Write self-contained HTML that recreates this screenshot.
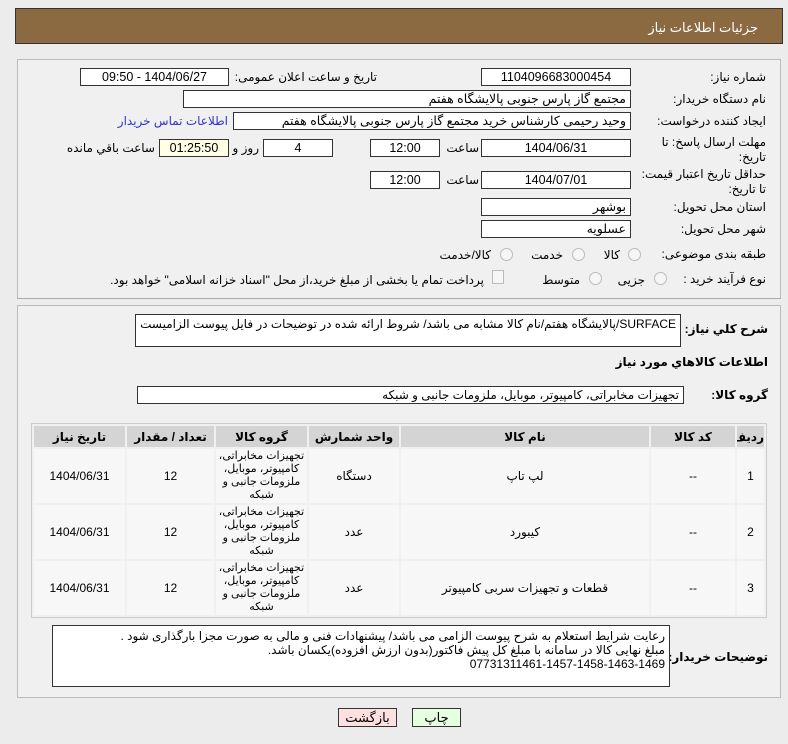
<!DOCTYPE html>
<html dir="rtl"><head><meta charset="utf-8"><style>
body{margin:0;width:788px;height:744px;background:#ececec;font-family:"Liberation Sans","DejaVu Sans",sans-serif;font-size:12px;color:#000;position:relative;overflow:hidden}
.a{position:absolute}
.hdr{left:15px;top:8px;width:768px;height:36px;background:#8b6a42;border:1px solid #333;box-sizing:border-box}
.hdr span{position:absolute;right:24px;top:11px;color:#fff;font-size:13px}
.panel{left:17px;top:59px;width:764px;height:240px;border:1px solid #bbb;border-bottom:none;background:#f0f0f0;box-sizing:border-box}
.panel2{left:17px;top:305px;width:764px;height:393px;border:1px solid #bbb;background:#f0f0f0;box-sizing:border-box}
.sep{left:17px;top:298px;width:764px;height:1px;background:#aaa}
.box{position:absolute;background:#fff;border:1px solid #333;box-sizing:border-box;height:18px;line-height:16px;text-align:center;font-size:12.5px;overflow:hidden;white-space:nowrap}
.l{position:absolute;font-size:12px;white-space:nowrap}
.r{text-align:right;padding-right:4px}
.rad{position:absolute;width:11px;height:11px;border-radius:50%;border:1px solid #bbb;background:#f6f6f6}
table{position:absolute;left:31px;top:423px;width:736px;border-collapse:separate;border-spacing:2px;background:#f0f0f0;border:1px solid #ccc;table-layout:fixed}
th{background:#d4d4d4;height:21px;padding:0;font-size:12px;font-weight:bold;overflow:hidden;white-space:nowrap}
td{background:#f7f7f7;height:54px;padding:0;text-align:center;font-size:12px;line-height:13px;overflow:hidden}
td.g{font-size:11px;white-space:nowrap}
.btn{position:absolute;height:19px;border:1px solid #333;box-sizing:border-box;text-align:center;line-height:17px;font-size:13px}
</style></head><body>
<div class="a hdr"><span>جزئیات اطلاعات نیاز</span></div>
<div class="a panel"></div>
<div class="a sep"></div>
<div class="a panel2"></div>

<div class="l" style="right:22px;top:70px">شماره نیاز:</div>
<div class="box" style="left:481px;top:68px;width:150px">1104096683000454</div>
<div class="l" style="right:411px;top:70px">تاریخ و ساعت اعلان عمومی:</div>
<div class="box" style="left:80px;top:68px;width:149px">1404/06/27 - 09:50</div>

<div class="l" style="right:22px;top:92px">نام دستگاه خریدار:</div>
<div class="box r" style="left:183px;top:90px;width:448px">مجتمع گاز پارس جنوبی  پالایشگاه هفتم</div>

<div class="l" style="right:22px;top:114px">ایجاد کننده درخواست:</div>
<div class="box r" style="left:233px;top:112px;width:398px">وحید رحیمی کارشناس خرید مجتمع گاز پارس جنوبی  پالایشگاه هفتم</div>
<div class="l" style="right:560px;top:114px;color:#3333cc">اطلاعات تماس خریدار</div>

<div class="l" style="right:22px;top:135px;line-height:15px">مهلت ارسال پاسخ: تا<br>تاریخ:</div>
<div class="box" style="left:481px;top:139px;width:150px">1404/06/31</div>
<div class="l" style="right:309px;top:141px">ساعت</div>
<div class="box" style="left:370px;top:139px;width:70px">12:00</div>
<div class="box" style="left:263px;top:139px;width:70px">4</div>
<div class="l" style="right:529px;top:141px">روز و</div>
<div class="box" style="left:159px;top:139px;width:70px;background:#ffffe6">01:25:50</div>
<div class="l" style="right:633px;top:141px">ساعت باقي مانده</div>

<div class="l" style="right:22px;top:167px;line-height:15px">حداقل تاریخ اعتبار قیمت:<br>تا تاریخ:</div>
<div class="box" style="left:481px;top:171px;width:150px">1404/07/01</div>
<div class="l" style="right:309px;top:173px">ساعت</div>
<div class="box" style="left:370px;top:171px;width:70px">12:00</div>

<div class="l" style="right:22px;top:200px">استان محل تحویل:</div>
<div class="box r" style="left:481px;top:198px;width:150px">بوشهر</div>
<div class="l" style="right:22px;top:222px">شهر محل تحویل:</div>
<div class="box r" style="left:481px;top:220px;width:150px">عسلویه</div>

<div class="l" style="right:22px;top:247px">طبقه بندی موضوعی:</div>
<div class="rad" style="left:628px;top:248px"></div><div class="l" style="right:168px;top:248px">کالا</div>
<div class="rad" style="left:572px;top:248px"></div><div class="l" style="right:225px;top:248px">خدمت</div>
<div class="rad" style="left:500px;top:248px"></div><div class="l" style="right:297px;top:248px">کالا/خدمت</div>

<div class="l" style="right:22px;top:272px">نوع فرآیند خرید :</div>
<div class="rad" style="left:654px;top:272px"></div><div class="l" style="right:143px;top:273px">جزیی</div>
<div class="rad" style="left:589px;top:272px"></div><div class="l" style="right:208px;top:273px">متوسط</div>
<div class="a" style="left:492px;top:270px;width:10px;height:12px;border:1px solid #bbb;background:#f6f6f6"></div>
<div class="l" style="right:304px;top:273px">پرداخت تمام یا بخشی از مبلغ خرید،از محل "اسناد خزانه اسلامی" خواهد بود.</div>

<div class="l" style="right:20px;top:322px;font-weight:bold">شرح كلي نياز:</div>
<div class="box r" style="left:135px;top:314px;width:546px;height:33px;text-align:right;line-height:18px;font-size:12px">SURFACE/پالایشگاه هفتم/نام کالا مشابه می باشد/ شروط ارائه شده در توضیحات در فایل پیوست الزامیست</div>
<div class="l" style="right:20px;top:355px;font-weight:bold">اطلاعات كالاهاي مورد نياز</div>
<div class="l" style="right:20px;top:388px;font-weight:bold">گروه کالا:</div>
<div class="box r" style="left:137px;top:386px;width:547px;height:18px;text-align:right;line-height:16px;font-size:12px">تجهیزات مخابراتی، کامپیوتر، موبایل، ملزومات جانبی و شبکه</div>

<table>
<colgroup><col style="width:27px"><col style="width:84px"><col style="width:248px"><col style="width:90px"><col style="width:91px"><col style="width:87px"><col></colgroup>
<tr><th>ردیف</th><th>کد کالا</th><th>نام کالا</th><th>واحد شمارش</th><th>گروه کالا</th><th>تعداد / مقدار</th><th>تاریخ نیاز</th></tr>
<tr><td>1</td><td>--</td><td>لپ تاپ</td><td>دستگاه</td><td class="g">تجهیزات مخابراتی،<br>کامپیوتر، موبایل،<br>ملزومات جانبی و<br>شبکه</td><td>12</td><td>1404/06/31</td></tr>
<tr><td>2</td><td>--</td><td>کیبورد</td><td>عدد</td><td class="g">تجهیزات مخابراتی،<br>کامپیوتر، موبایل،<br>ملزومات جانبی و<br>شبکه</td><td>12</td><td>1404/06/31</td></tr>
<tr><td>3</td><td>--</td><td>قطعات و تجهیزات سربی کامپیوتر</td><td>عدد</td><td class="g">تجهیزات مخابراتی،<br>کامپیوتر، موبایل،<br>ملزومات جانبی و<br>شبکه</td><td>12</td><td>1404/06/31</td></tr>
</table>

<div class="l" style="right:20px;top:650px;font-weight:bold">توضیحات خریدار:</div>
<div class="box r" style="left:52px;top:625px;width:618px;height:62px;text-align:right;line-height:14px;padding-top:3px;white-space:normal;font-size:12px">رعایت شرایط استعلام به شرح پیوست الزامی می باشد/ پیشنهادات فنی و مالی به صورت مجزا بارگذاری شود .<br>مبلغ نهایی کالا در سامانه با مبلغ کل پیش فاکتور(بدون ارزش افزوده)یکسان باشد.<br>07731311461-1457-1458-1463-1469</div>

<div class="btn" style="left:412px;top:708px;width:49px;background:#e6ffe0">چاپ</div>
<div class="btn" style="left:338px;top:708px;width:59px;background:#ffe0e0">بازگشت</div>
</body></html>
